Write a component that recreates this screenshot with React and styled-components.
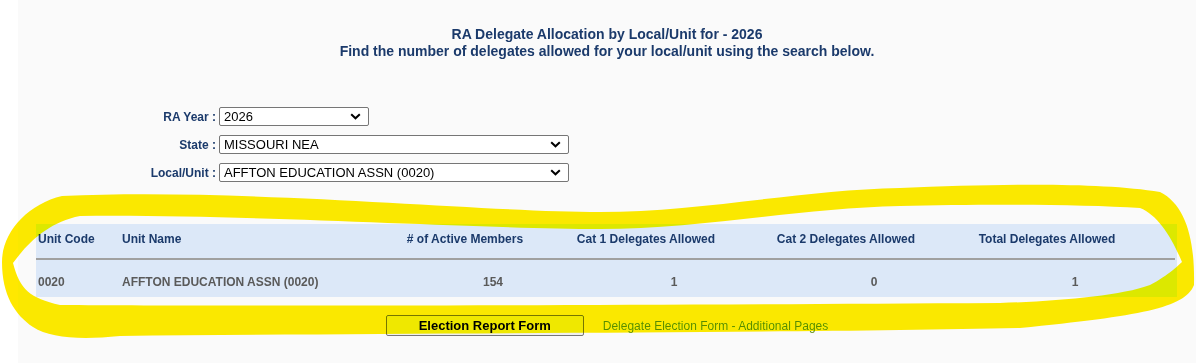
import React from 'react';
import styled, { createGlobalStyle } from 'styled-components';

const GlobalStyle = createGlobalStyle`
  html, body {
    margin: 0;
    padding: 0;
    background: #ffffff;
  }
  body {
    font-family: "Liberation Sans", Arial, sans-serif;
  }
`;

const Page = styled.div`
  position: relative;
  width: 1196px;
  height: 363px;
  padding-left: 18px;
  box-sizing: border-box;
  overflow: hidden;
`;

const Content = styled.main`
  height: 100%;
  background: #fafafa;
  padding-top: 26px;
  box-sizing: border-box;
`;

const Heading = styled.h1`
  margin: 0;
  text-align: center;
  font-size: 14px;
  line-height: 17px;
  font-weight: bold;
  color: #1b3a6b;
`;

const SearchForm = styled.form`
  display: grid;
  grid-template-columns: 201px auto;
  row-gap: 9px;
  align-items: center;
  justify-content: start;
  margin-top: 47px;
`;

const Label = styled.label`
  text-align: right;
  padding-right: 3px;
  font-size: 12px;
  font-weight: bold;
  color: #1b3a6b;
`;

const SelectBox = styled.div`
  display: flex;
  align-items: center;
  justify-content: space-between;
  width: ${p => p.$width}px;
  height: 19px;
  box-sizing: border-box;
  border: 1px solid #767676;
  border-radius: 2px;
  background: #ffffff;
  padding: 0 7px 0 4px;
  font-size: 13px;
  color: #000000;
`;

const Table = styled.div`
  display: grid;
  grid-template-columns: 84px 245px 200px 162px 238px 164px 48px;
  width: 1141px;
  margin: 42px 0 0 18px;
  background: #dce8f8;
`;

const HeadCell = styled.div`
  height: 36px;
  padding: 8px 0 0 ${p => (p.$left ? 2 : 0)}px;
  box-sizing: border-box;
  text-align: ${p => (p.$left ? 'left' : 'center')};
  font-size: 12px;
  font-weight: bold;
  color: #1b3a6b;
  border-bottom: 2px solid #a0a0a0;
`;

const HeadEnd = styled.div`
  margin-right: 2px;
  border-bottom: 2px solid #a0a0a0;
`;

const BodyCell = styled.div`
  height: 37px;
  padding: 15px 0 0 ${p => (p.$left ? 2 : 56)}px;
  box-sizing: border-box;
  text-align: ${p => (p.$left ? 'left' : 'center')};
  font-size: 12px;
  font-weight: bold;
  color: #5a5a5a;
`;

const Actions = styled.div`
  display: flex;
  justify-content: center;
  align-items: center;
  gap: 19px;
  margin-top: 18px;
`;

const FormButton = styled.button`
  width: 198px;
  height: 21px;
  border: 1px solid #767676;
  border-radius: 2px;
  background: #efefef;
  font-family: "Liberation Sans", Arial, sans-serif;
  font-size: 13px;
  font-weight: bold;
  color: #000000;
  padding: 0;
`;

const PageLink = styled.a`
  font-size: 12px;
  color: #5a8a10;
  text-decoration: none;
`;

const Highlight = styled.svg`
  position: absolute;
  left: 0;
  top: 0;
  pointer-events: none;
  mix-blend-mode: darken;
`;

const Chevron = () => (
  <svg width="11" height="7" viewBox="0 0 11 7">
    <path d="M1.2 1.2 L5.5 5.3 L9.8 1.2" fill="none" stroke="#000" strokeWidth="2" />
  </svg>
);

const Select = ({ width, value }) => (
  <SelectBox $width={width}>
    <span>{value}</span>
    <Chevron />
  </SelectBox>
);

// hand-drawn highlighter loop around the results table
const ring =
  'M2 262 C2 232 28 204 62 196 C250 188 480 212 600 212 C700 212 800 190 900 188 ' +
  'C1000 184 1100 182 1160 192 C1186 205 1195 240 1194 285 C1185 308 1140 316 1020 328 ' +
  'C800 333 400 333 120 336 C80 340 50 338 33 327 C15 315 2 295 2 262 Z ' +
  'M13 263 C20 290 30 298 60 305 C200 306 500 306 1000 303 C1060 301 1120 296 1150 285 ' +
  'C1168 276 1182 262 1182 262 C1172 238 1158 215 1140 208 C1080 204 980 204 900 206 ' +
  'C800 208 700 229 600 229 C480 229 250 214 80 216 C50 222 30 240 13 263 Z';

const App = () => {
  return (
    <Page>
      <GlobalStyle />
      <Content>
        <Heading>RA Delegate Allocation by Local/Unit for - 2026</Heading>
        <Heading>Find the number of delegates allowed for your local/unit using the search below.</Heading>

        <SearchForm>
          <Label>RA Year :</Label>
          <Select width={150} value="2026" />
          <Label>State :</Label>
          <Select width={350} value="MISSOURI NEA" />
          <Label>Local/Unit :</Label>
          <Select width={350} value="AFFTON EDUCATION ASSN (0020)" />
        </SearchForm>

        <Table>
          <HeadCell $left>Unit Code</HeadCell>
          <HeadCell $left>Unit Name</HeadCell>
          <HeadCell># of Active Members</HeadCell>
          <HeadCell>Cat 1 Delegates Allowed</HeadCell>
          <HeadCell>Cat 2 Delegates Allowed</HeadCell>
          <HeadCell>Total Delegates Allowed</HeadCell>
          <HeadEnd />

          <BodyCell $left>0020</BodyCell>
          <BodyCell $left>AFFTON EDUCATION ASSN (0020)</BodyCell>
          <BodyCell>154</BodyCell>
          <BodyCell>1</BodyCell>
          <BodyCell>0</BodyCell>
          <BodyCell>1</BodyCell>
          <div />
        </Table>

        <Actions>
          <FormButton type="button">Election Report Form</FormButton>
          <PageLink href="#">Delegate Election Form - Additional Pages</PageLink>
        </Actions>
      </Content>

      <Highlight width="1196" height="363" viewBox="0 0 1196 363">
        <path d={ring} fill="#ffe800" fillRule="evenodd" />
      </Highlight>
    </Page>
  );
};

export default App;
